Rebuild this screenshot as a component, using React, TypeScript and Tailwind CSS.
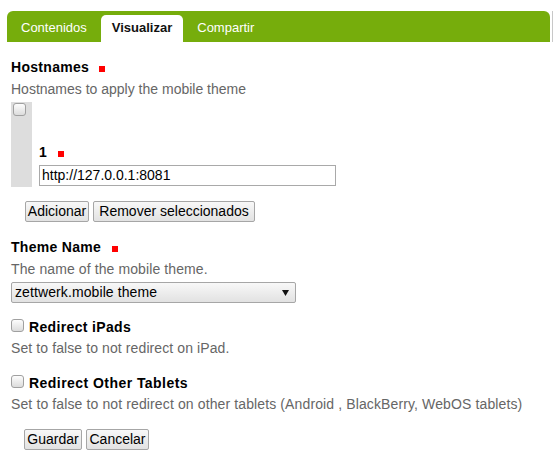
import React from "react";

const Req = ({ ml = "ml-[13px]" }: { ml?: string }) => (
  <span className={"inline-block w-[6px] h-[6px] bg-[#ff0000] " + ml} />
);

const Btn = ({ children, w }: { children: React.ReactNode; w: string }) => (
  <div
    className={
      "h-[21px] border border-[#a6a6a6] rounded-[2px] bg-linear-to-b from-[#f8f8f8] to-[#e2e2e2] text-[14px] leading-[19px] text-black text-center whitespace-nowrap " +
      w
    }
  >
    {children}
  </div>
);

const Check = () => (
  <div className="w-[13px] h-[13px] border border-[#a0a0a0] rounded-[3px] bg-linear-to-b from-[#fdfdfd] to-[#dcdcdc] shrink-0" />
);

export default function App() {
  return (
    <div
      className="w-[554px] h-[461px] bg-white overflow-hidden text-black"
      style={{ fontFamily: '"Liberation Sans", Arial, sans-serif' }}
    >
      <div className="flex pt-[11px] pl-[7px]">
        <div className="w-[543px] h-[31px] bg-[#76ad0c] rounded-t-[6px] flex items-end text-[13px]">
          <div className="ml-[3px] px-[11px] h-[27px] leading-[25px] text-white">Contenidos</div>
          <div className="ml-[3px] px-[11px] h-[27px] leading-[25px] bg-white rounded-t-[5px] font-bold text-[#111]">
            Visualizar
          </div>
          <div className="ml-[3px] px-[11px] h-[27px] leading-[25px] text-white">Compartir</div>
        </div>
        <div className="ml-[2px] w-[1px] h-[31px] bg-[#c8c8c8]" />
      </div>

      <div className="pl-[11px] text-[14px] leading-[16px]">
        <div className="mt-[17px] font-bold tracking-[0.3px]">
          Hostnames
          <Req ml="ml-[10px]" />
        </div>
        <div className="mt-[6px] text-[#666]">Hostnames to apply the mobile theme</div>

        <div className="mt-[5px] flex">
          <div className="w-[21px] bg-[#dddddd] pl-[2px] pt-[1px]">
            <Check />
          </div>
          <div className="pl-[7px] pb-[1px]">
            <div className="mt-[42px] font-bold">
              1
              <Req ml="ml-[11px]" />
            </div>
            <div className="mt-[5px] w-[297px] h-[21px] border border-[#a9a9a9] pl-[2px] leading-[19px]">
              http://127.0.0.1:8081
            </div>
          </div>
        </div>

        <div className="mt-[14px] ml-[14px] flex gap-[4px]">
          <Btn w="w-[64px]">Adicionar</Btn>
          <Btn w="w-[162px]">Remover seleccionados</Btn>
        </div>

        <div className="mt-[17px] font-bold tracking-[0.3px]">
          Theme Name
          <Req ml="ml-[11px]" />
        </div>
        <div className="mt-[6px] text-[#666] tracking-[0.1px]">The name of the mobile theme.</div>
        <div className="mt-[5px] w-[285px] h-[21px] border border-[#a6a6a6] rounded-[2px] bg-linear-to-b from-[#f8f8f8] to-[#e2e2e2] flex items-center justify-between pl-[3px] pr-[6px]">
          <span className="leading-[19px] tracking-[0.1px]">zettwerk.mobile theme</span>
          <svg width="7" height="6" viewBox="0 0 7 6">
            <path d="M0 0 H7 L3.5 6 Z" fill="#111" />
          </svg>
        </div>

        <div className="mt-[16px] flex items-start">
          <Check />
          <span className="ml-[5px] font-bold tracking-[0.35px]">Redirect iPads</span>
        </div>
        <div className="mt-[5px] text-[#666] tracking-[0.1px]">Set to false to not redirect on iPad.</div>

        <div className="mt-[19px] flex items-start">
          <Check />
          <span className="ml-[5px] font-bold tracking-[0.45px]">Redirect Other Tablets</span>
        </div>
        <div className="mt-[5px] text-[#666] tracking-[0.12px]">
          Set to false to not redirect on other tablets (Android , BlackBerry, WebOS tablets)
        </div>

        <div className="mt-[17px] ml-[13px] flex gap-[4px]">
          <Btn w="w-[58px]">Guardar</Btn>
          <Btn w="w-[63px]">Cancelar</Btn>
        </div>
      </div>
    </div>
  );
}
